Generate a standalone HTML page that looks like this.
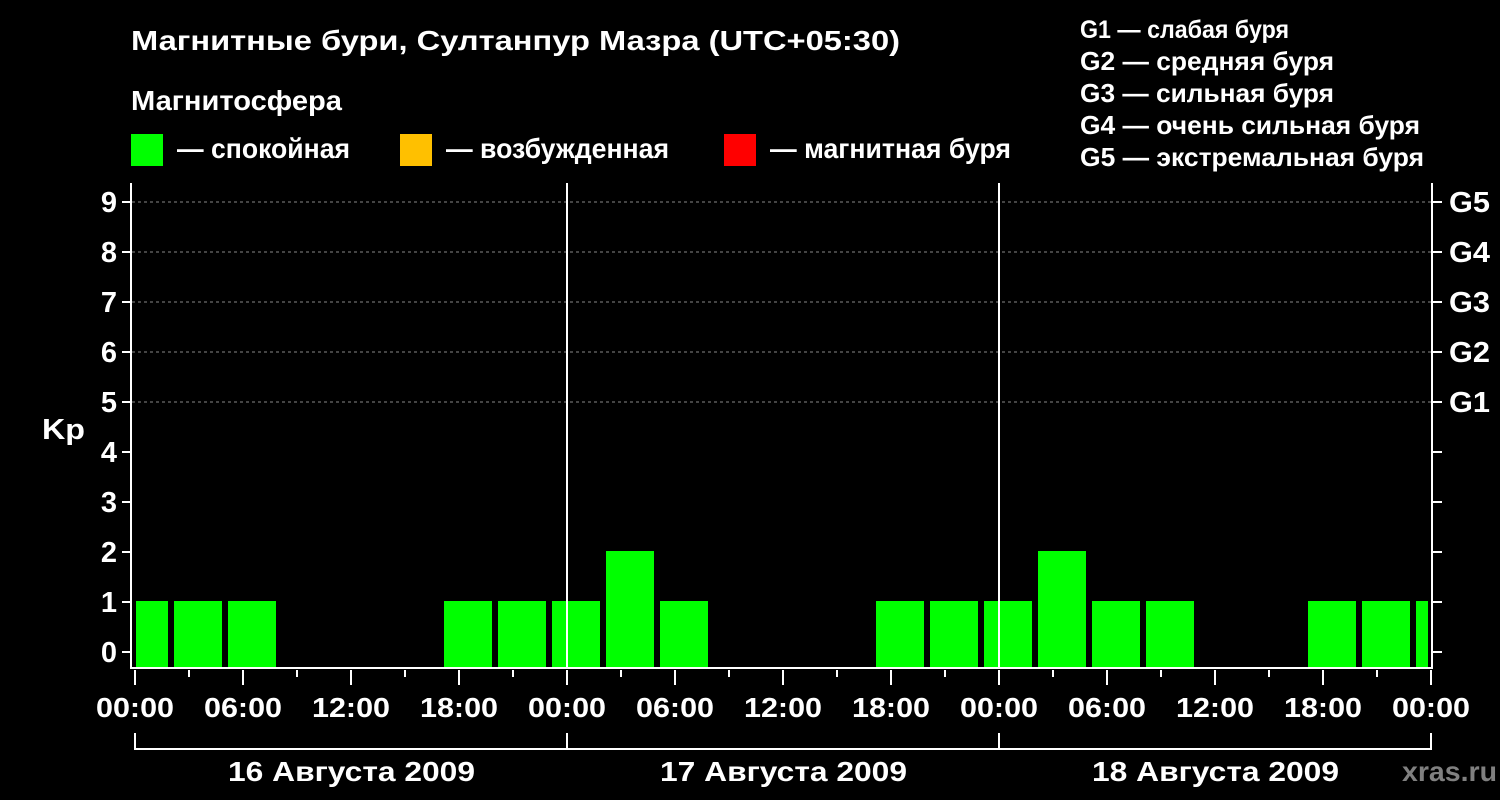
<html><head><style>body{margin:0;background:#000;}svg{display:block}text{font-family:"Liberation Sans",Arial,sans-serif;font-weight:bold;fill:#fff}</style></head><body>
<svg width="1500" height="800" viewBox="0 0 1500 800">
<rect width="1500" height="800" fill="#000"/>
<g font-size="28" lengthAdjust="spacingAndGlyphs">
<text x="131" y="50" textLength="769" lengthAdjust="spacingAndGlyphs">Магнитные бури, Султанпур Мазра (UTC+05:30)</text>
<text x="131" y="110" textLength="211" lengthAdjust="spacingAndGlyphs">Магнитосфера</text>
<text x="177" y="158" textLength="173" lengthAdjust="spacingAndGlyphs">— спокойная</text>
<text x="446" y="158" textLength="223" lengthAdjust="spacingAndGlyphs">— возбужденная</text>
<text x="770" y="158" textLength="241" lengthAdjust="spacingAndGlyphs">— магнитная буря</text>
</g>
<rect x="131" y="134" width="32" height="32" fill="#00ff00"/>
<rect x="400" y="134" width="32" height="32" fill="#ffc000"/>
<rect x="724" y="134" width="32" height="32" fill="#ff0000"/>
<g font-size="26"><text x="1080" y="38" font-size="25" textLength="209" lengthAdjust="spacingAndGlyphs">G1 — слабая буря</text><text x="1080" y="70" textLength="254" lengthAdjust="spacingAndGlyphs">G2 — средняя буря</text><text x="1080" y="102" textLength="254" lengthAdjust="spacingAndGlyphs">G3 — сильная буря</text><text x="1080" y="134" textLength="340" lengthAdjust="spacingAndGlyphs">G4 — очень сильная буря</text><text x="1080" y="166" textLength="344" lengthAdjust="spacingAndGlyphs">G5 — экстремальная буря</text></g>
<g stroke="#888" stroke-dasharray="3,3" stroke-width="1"><line x1="132" x2="1432" y1="202" y2="202"/><line x1="132" x2="1432" y1="252" y2="252"/><line x1="132" x2="1432" y1="302" y2="302"/><line x1="132" x2="1432" y1="352" y2="352"/><line x1="132" x2="1432" y1="402" y2="402"/></g>
<g fill="#00ff00">
<rect x="136" y="601" width="32" height="67"/><rect x="174" y="601" width="48" height="67"/><rect x="228" y="601" width="48" height="67"/>
<rect x="444" y="601" width="48" height="67"/><rect x="498" y="601" width="48" height="67"/><rect x="552" y="601" width="48" height="67"/>
<rect x="606" y="551" width="48" height="117"/><rect x="660" y="601" width="48" height="67"/>
<rect x="876" y="601" width="48" height="67"/><rect x="930" y="601" width="48" height="67"/><rect x="984" y="601" width="48" height="67"/>
<rect x="1038" y="551" width="48" height="117"/><rect x="1092" y="601" width="48" height="67"/><rect x="1146" y="601" width="48" height="67"/>
<rect x="1308" y="601" width="48" height="67"/><rect x="1362" y="601" width="48" height="67"/><rect x="1416" y="601" width="12" height="67"/>
</g>
<g stroke="#fff" stroke-width="2" fill="none">
<polyline points="131,183 131,668 1432,668 1432,183"/>
<line x1="567" y1="183" x2="567" y2="668"/><line x1="999" y1="183" x2="999" y2="668"/>
<path d="M122 202h9M122 252h9M122 302h9M122 352h9M122 402h9M122 452h9M122 502h9M122 552h9M122 602h9M122 652h9"/>
<path d="M1432 202h10M1432 252h10M1432 302h10M1432 352h10M1432 402h10M1432 452h10M1432 502h10M1432 552h10M1432 602h10M1432 652h10"/>
<path d="M135 670v15M243 670v15M351 670v15M459 670v15M567 670v15M675 670v15M783 670v15M891 670v15M999 670v15M1107 670v15M1215 670v15M1323 670v15M1431 670v15"/>
<path d="M189 670v7M297 670v7M405 670v7M513 670v7M621 670v7M729 670v7M837 670v7M945 670v7M1053 670v7M1161 670v7M1269 670v7M1377 670v7"/>
<polyline points="135,733 135,749 1431,749 1431,733"/><line x1="567" y1="733" x2="567" y2="749"/><line x1="999" y1="733" x2="999" y2="749"/>
</g>
<g font-size="29" text-anchor="end"><text x="117" y="662">0</text><text x="117" y="612">1</text><text x="117" y="562">2</text><text x="117" y="512">3</text><text x="117" y="462">4</text><text x="117" y="412">5</text><text x="117" y="362">6</text><text x="117" y="312">7</text><text x="117" y="262">8</text><text x="117" y="212">9</text></g>
<text x="42" y="439" font-size="29" textLength="43" lengthAdjust="spacingAndGlyphs">Kp</text>
<g font-size="29"><text x="1449" y="212" textLength="41" lengthAdjust="spacingAndGlyphs">G5</text><text x="1449" y="262" textLength="41" lengthAdjust="spacingAndGlyphs">G4</text><text x="1449" y="312" textLength="41" lengthAdjust="spacingAndGlyphs">G3</text><text x="1449" y="362" textLength="41" lengthAdjust="spacingAndGlyphs">G2</text><text x="1449" y="412" textLength="41" lengthAdjust="spacingAndGlyphs">G1</text></g>
<g font-size="28">
<text x="96" y="717" textLength="78" lengthAdjust="spacingAndGlyphs">00:00</text><text x="204" y="717" textLength="78" lengthAdjust="spacingAndGlyphs">06:00</text><text x="312" y="717" textLength="78" lengthAdjust="spacingAndGlyphs">12:00</text><text x="420" y="717" textLength="78" lengthAdjust="spacingAndGlyphs">18:00</text><text x="528" y="717" textLength="78" lengthAdjust="spacingAndGlyphs">00:00</text><text x="636" y="717" textLength="78" lengthAdjust="spacingAndGlyphs">06:00</text><text x="744" y="717" textLength="78" lengthAdjust="spacingAndGlyphs">12:00</text><text x="852" y="717" textLength="78" lengthAdjust="spacingAndGlyphs">18:00</text><text x="960" y="717" textLength="78" lengthAdjust="spacingAndGlyphs">00:00</text><text x="1068" y="717" textLength="78" lengthAdjust="spacingAndGlyphs">06:00</text><text x="1176" y="717" textLength="78" lengthAdjust="spacingAndGlyphs">12:00</text><text x="1284" y="717" textLength="78" lengthAdjust="spacingAndGlyphs">18:00</text><text x="1392" y="717" textLength="78" lengthAdjust="spacingAndGlyphs">00:00</text>
<text x="228" y="781" textLength="247" lengthAdjust="spacingAndGlyphs">16 Августа 2009</text><text x="660" y="781" textLength="247" lengthAdjust="spacingAndGlyphs">17 Августа 2009</text><text x="1092" y="781" textLength="247" lengthAdjust="spacingAndGlyphs">18 Августа 2009</text>
<text x="1402" y="781" textLength="95" lengthAdjust="spacingAndGlyphs" style="fill:#808080">xras.ru</text>
</g>
</svg></body></html>
